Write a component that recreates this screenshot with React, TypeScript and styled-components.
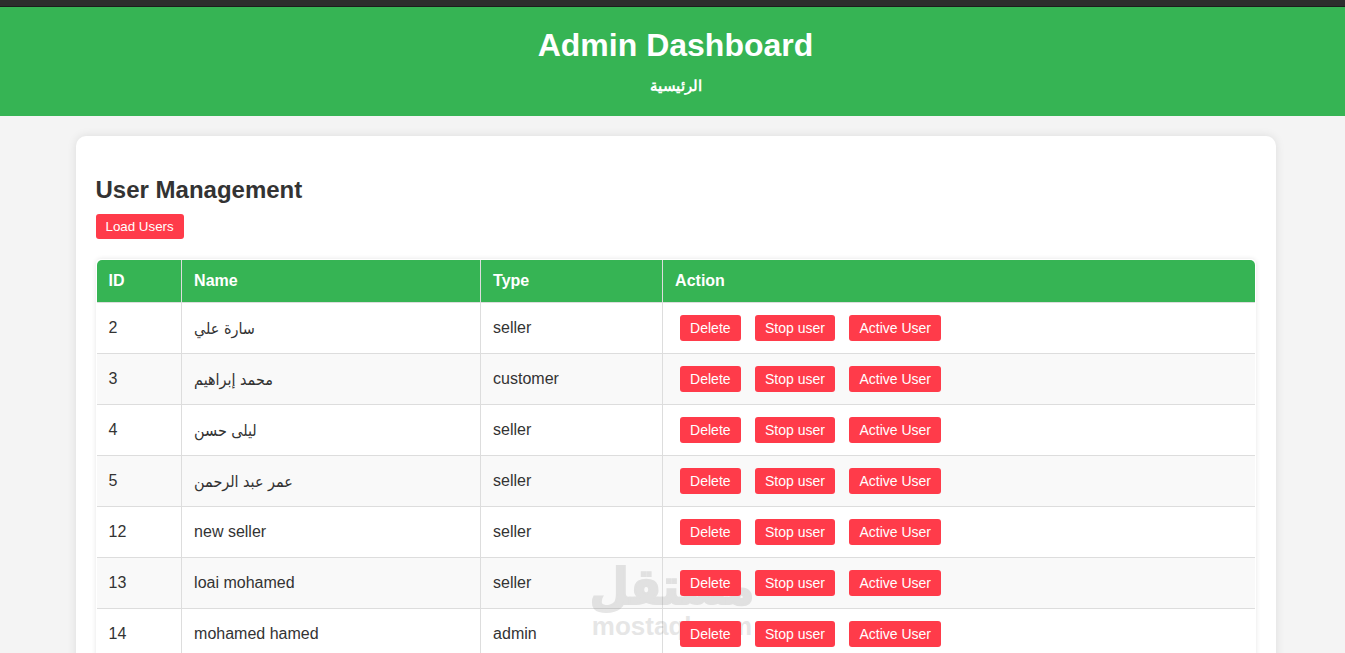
import React from 'react';
import styled, { createGlobalStyle } from 'styled-components';

const GlobalStyle = createGlobalStyle`
  html, body {
    margin: 0;
    padding: 0;
    height: 100%;
    overflow: hidden;
    background: #f4f4f4;
    color: #333;
    font-family: "Liberation Sans", "DejaVu Sans Condensed", Arial, sans-serif;
  }
`;

const Page = styled.div`
  position: relative;
  width: 1351px;
`;

const TopBar = styled.div`
  height: 6px;
  background: #2d2d2d;
  border-bottom: 1px solid #1c1c1c;
`;

const Header = styled.header`
  background: #36b454;
  color: #fff;
  height: 109px;
  text-align: center;
  overflow: hidden;
`;

const Title = styled.h1`
  font-size: 32px;
  line-height: 37px;
  font-weight: 700;
  margin: 20px 0 0;
`;

const HomeLink = styled.a`
  display: block;
  margin-top: 10px;
  color: #fff;
  font-family: "Liberation Sans", sans-serif;
  font-size: 15px;
  font-weight: 700;
  line-height: 24px;
  text-decoration: none;
`;

const Card = styled.main`
  box-sizing: border-box;
  width: 1200px;
  margin: 20px auto;
  padding: 20px;
  background: #fff;
  border-radius: 10px;
  box-shadow: 0 0 10px rgba(0, 0, 0, 0.1);
`;

const SectionTitle = styled.h2`
  font-size: 24px;
  line-height: 28px;
  font-weight: 700;
  margin: 20px 0 10px;
  color: #333;
`;

const Button = styled.button<{ $spaced?: boolean }>`
  position: relative;
  z-index: 2;
  display: inline-block;
  height: 26px;
  margin: ${props => (props.$spaced ? '0 5px' : '0')};
  padding: 0 10px;
  border: none;
  border-radius: 3px;
  background: #ff3b4a;
  color: #fff;
  font-family: inherit;
  font-size: ${props => (props.$spaced ? '14px' : '13.33px')};
  vertical-align: middle;
  cursor: pointer;
`;

const LoadButton = styled(Button)`
  display: block;
  height: 25px;
`;

const Table = styled.table`
  width: 1160px;
  margin-top: 20px;
  border: 1px solid #fff;
  border-collapse: separate;
  border-spacing: 0;
  table-layout: fixed;
  box-shadow: 0 0 5px rgba(0, 0, 0, 0.1);
  border-radius: 5px;
  font-size: 16px;
`;

const HeadCell = styled.th<{ $width?: number }>`
  width: ${props => (props.$width ? `${props.$width}px` : 'auto')};
  box-sizing: border-box;
  height: 43px;
  padding: 0 12px 0 12.6px;
  background: #36b454;
  color: #fff;
  font-weight: 700;
  text-align: left;
  border-right: 1px solid #ddd;
  border-bottom: 1px solid #ddd;
  &:first-child { border-top-left-radius: 5px; padding-left: 12px; }
  &:last-child { border-top-right-radius: 5px; border-right: none; }
`;

const Row = styled.tr`
  &:nth-child(even) { background: #f9f9f9; }
`;

const Cell = styled.td`
  box-sizing: border-box;
  height: 51px;
  padding: 12px 12px 12px 12.6px;
  border-right: 1px solid #ddd;
  border-bottom: 1px solid #ddd;
  color: #333;
  &:first-child { padding-left: 12px; }
  &:last-child { border-right: none; }
`;

const Watermark = styled.div`
  position: absolute;
  left: 587px;
  top: 561px;
  width: 170px;
  text-align: center;
  color: #777;
  opacity: 0.18;
  pointer-events: none;
`;

const WatermarkArabic = styled.div`
  font-size: 50px;
  line-height: 52px;
  font-weight: 700;
  -webkit-text-stroke: 2px #777;
`;

const WatermarkLatin = styled.div`
  font-size: 26px;
  line-height: 26px;
  font-weight: 700;
`;

const users = [
  { id: 2, name: 'سارة علي', type: 'seller' },
  { id: 3, name: 'محمد إبراهيم', type: 'customer' },
  { id: 4, name: 'ليلى حسن', type: 'seller' },
  { id: 5, name: 'عمر عبد الرحمن', type: 'seller' },
  { id: 12, name: 'new seller', type: 'seller' },
  { id: 13, name: 'loai mohamed', type: 'seller' },
  { id: 14, name: 'mohamed hamed', type: 'admin' },
];

const App: React.FC = () => (
  <Page>
    <GlobalStyle />
    <TopBar />
    <Header>
      <Title>Admin Dashboard</Title>
      <HomeLink href="#">الرئيسية</HomeLink>
    </Header>
    <Card>
      <SectionTitle>User Management</SectionTitle>
      <LoadButton>Load Users</LoadButton>
      <Table>
        <thead>
          <tr>
            <HeadCell $width={85}>ID</HeadCell>
            <HeadCell $width={299}>Name</HeadCell>
            <HeadCell $width={182}>Type</HeadCell>
            <HeadCell>Action</HeadCell>
          </tr>
        </thead>
        <tbody>
          {users.map(user => (
            <Row key={user.id}>
              <Cell>{user.id}</Cell>
              <Cell>{user.name}</Cell>
              <Cell>{user.type}</Cell>
              <Cell>
                <Button $spaced>Delete</Button>{' '}
                <Button $spaced>Stop user</Button>{' '}
                <Button $spaced>Active User</Button>
              </Cell>
            </Row>
          ))}
        </tbody>
      </Table>
    </Card>
    <Watermark>
      <WatermarkArabic>مستقل</WatermarkArabic>
      <WatermarkLatin>mostaql.com</WatermarkLatin>
    </Watermark>
  </Page>
);

export default App;
